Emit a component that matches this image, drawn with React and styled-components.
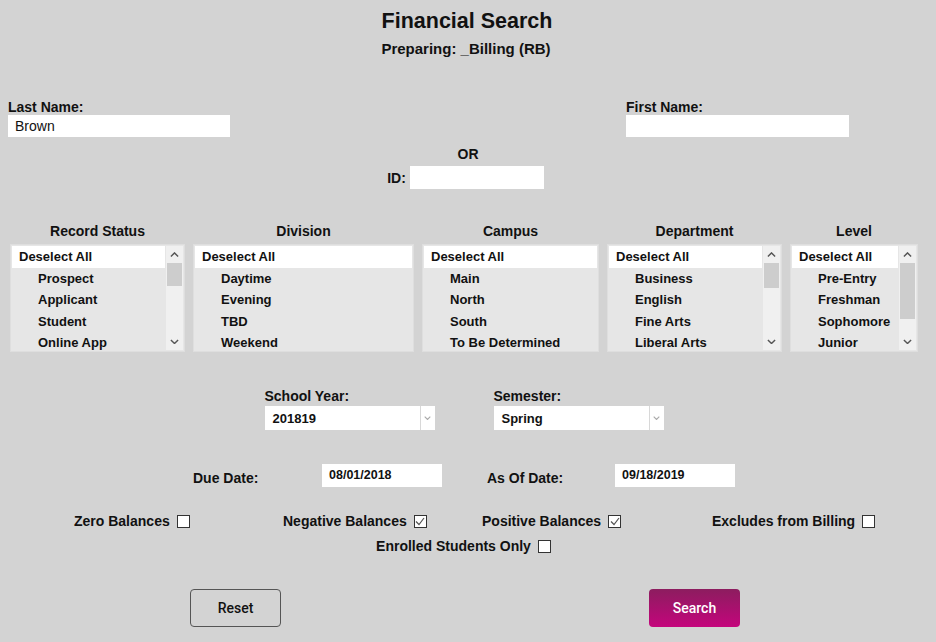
import styled, { createGlobalStyle } from "styled-components";

const Global = createGlobalStyle`
  html, body { margin: 0; padding: 0; background: #d3d3d3; }
  body { font-family: "Liberation Sans", Arial, sans-serif; color: #111; }
`;

const LISTS = [
  { title: "Record Status", width: 175, items: ["Prospect", "Applicant", "Student", "Online App"], thumb: 23 },
  { title: "Division", width: 221, items: ["Daytime", "Evening", "TBD", "Weekend"] },
  { title: "Campus", width: 177, items: ["Main", "North", "South", "To Be Determined"] },
  { title: "Department", width: 175, items: ["Business", "English", "Fine Arts", "Liberal Arts"], thumb: 25 },
  { title: "Level", width: 128, items: ["Pre-Entry", "Freshman", "Sophomore", "Junior"], thumb: 56 },
];

const Page = styled.div`
  width: 936px;
  height: 642px;
  display: flex;
  flex-direction: column;
  overflow: hidden;
`;

const Title = styled.h1`
  margin: 9px 0 0;
  font-size: 21.5px;
  line-height: 24px;
  text-align: center;
  font-weight: bold;
  padding-right: 2px;
`;

const Subtitle = styled.h2`
  margin: 6px 0 0;
  font-size: 15px;
  line-height: 20px;
  text-align: center;
  font-weight: bold;
  padding-right: 4px;
`;

const NameRow = styled.div`
  display: flex;
  justify-content: space-between;
  padding: 0 87px 0 8px;
  margin-top: 40px;
`;

const Field = styled.div`
  display: flex;
  flex-direction: column;
`;

const Label = styled.label`
  font-size: 14px;
  font-weight: bold;
  line-height: 16px;
  white-space: nowrap;
`;

const TextBox = styled.div`
  width: ${p => p.w}px;
  height: ${p => p.h || 22}px;
  background: #fff;
  box-sizing: border-box;
  padding-left: 7px;
  font-size: ${p => p.fs || 14}px;
  font-weight: ${p => (p.bold ? "bold" : "normal")};
  line-height: 22px;
`;

const Or = styled.div`
  margin-top: 9px;
  text-align: center;
  font-size: 14px;
  font-weight: bold;
  line-height: 16px;
`;

const IdRow = styled.div`
  display: flex;
  justify-content: center;
  align-items: center;
  gap: 4px;
  margin-top: 4px;
  padding-right: 5px;
`;

const ListsRow = styled.div`
  display: flex;
  gap: 8px;
  padding-left: 10px;
  margin-top: 34px;
`;

const ListCol = styled.div`
  width: ${p => p.w}px;
  display: flex;
  flex-direction: column;
`;

const ListTitle = styled.div`
  text-align: center;
  font-size: 14px;
  font-weight: bold;
  line-height: 16px;
  margin-bottom: 5px;
`;

const ListBox = styled.div`
  height: 108px;
  box-sizing: border-box;
  border: 1px solid #dedede;
  padding: 1px;
  background: #e6e6e6;
  display: flex;
  overflow: hidden;
`;

const Options = styled.div`
  flex: 1;
  display: flex;
  flex-direction: column;
`;

const Option = styled.div`
  flex: none;
  height: ${p => (p.all ? 22 : 21.4)}px;
  line-height: ${p => (p.all ? 22 : 21.4)}px;
  background: ${p => (p.all ? "#fff" : "transparent")};
  padding-left: ${p => (p.all ? 7 : 26)}px;
  font-size: 13px;
  font-weight: bold;
  white-space: nowrap;
  overflow: hidden;
`;

const Scrollbar = styled.div`
  width: 17px;
  background: #f0f0f0;
  display: flex;
  flex-direction: column;
  align-items: center;
  margin-left: 1px;
`;

const Arrow = styled.div`
  height: 17px;
  width: 17px;
  display: flex;
  align-items: center;
  justify-content: center;
`;

const Thumb = styled.div`
  width: 15px;
  height: ${p => p.h}px;
  background: #cdcdcd;
`;

const Spacer = styled.div`
  flex: 1;
`;

const SelectRow = styled.div`
  display: flex;
  justify-content: center;
  gap: 59px;
  margin-top: 36px;
  padding-right: 8px;
`;

const Select = styled.div`
  width: 170px;
  height: 24px;
  margin-top: 2px;
  background: #fff;
  display: flex;
`;

const SelectValue = styled.div`
  flex: 1;
  padding-left: 8px;
  font-size: 13px;
  font-weight: bold;
  line-height: 26px;
`;

const SelectButton = styled.div`
  width: 14px;
  border-left: 1px solid #d8d8d8;
  display: flex;
  align-items: center;
  justify-content: center;
`;

const DateRow = styled.div`
  display: grid;
  grid-template-columns: 129px 120px 45px 128px 120px;
  align-items: center;
  padding-left: 193px;
  margin-top: 34px;
`;

const DateLabel = styled(Label)`
  padding-top: 4px;
`;

const CheckRow = styled.div`
  display: grid;
  grid-template-columns: 209px 199px 230px auto;
  padding-left: 74px;
  margin-top: 25px;
`;

const CheckCenter = styled.div`
  display: flex;
  justify-content: center;
  margin-top: 7px;
  padding-right: 9px;
`;

const Check = styled.div`
  display: flex;
  align-items: center;
  gap: 7px;
  font-size: 14px;
  font-weight: bold;
  line-height: 18px;
  white-space: nowrap;
`;

const Box = styled.span`
  width: 13px;
  height: 13px;
  box-sizing: border-box;
  border: 1px solid #333;
  background: #fff;
  display: inline-flex;
  align-items: center;
  justify-content: center;
`;

const ButtonRow = styled.div`
  display: flex;
  padding-left: 190px;
  gap: 368px;
  margin-top: 34px;
`;

const Button = styled.button`
  width: 91px;
  height: 38px;
  border-radius: 4px;
  box-sizing: border-box;
  font-family: Roboto, "Liberation Sans", sans-serif;
  font-size: 14px;
  font-weight: 500;
  cursor: pointer;
  border: ${p => (p.primary ? "none" : "1px solid #555")};
  color: ${p => (p.primary ? "#fff" : "#111")};
  background: ${p =>
    p.primary ? "linear-gradient(#8c1d5f, #c4057c)" : "transparent"};
`;

function Chevron({ up, color = "#555", size = 9 }) {
  return (
    <svg width={size} height={size * 0.6} viewBox="0 0 10 6">
      <path
        d={up ? "M1 5 L5 1 L9 5" : "M1 1 L5 5 L9 1"}
        fill="none"
        stroke={color}
        strokeWidth="1.6"
      />
    </svg>
  );
}

function CheckBox({ label, checked }) {
  return (
    <Check>
      {label}
      <Box>
        {checked && (
          <svg width="10" height="9" viewBox="0 0 10 9">
            <path d="M1 4.5 L4 7.5 L9 1" fill="none" stroke="#555" strokeWidth="1.2" />
          </svg>
        )}
      </Box>
    </Check>
  );
}

function List({ title, width, items, thumb }) {
  return (
    <ListCol w={width}>
      <ListTitle>{title}</ListTitle>
      <ListBox>
        <Options>
          <Option all>Deselect All</Option>
          {items.map(i => (
            <Option key={i}>{i}</Option>
          ))}
        </Options>
        {thumb && (
          <Scrollbar>
            <Arrow><Chevron up /></Arrow>
            <Thumb h={thumb} />
            <Spacer />
            <Arrow><Chevron /></Arrow>
          </Scrollbar>
        )}
      </ListBox>
    </ListCol>
  );
}

export default function App() {
  return (
    <Page>
      <Global />
      <Title>Financial Search</Title>
      <Subtitle>Preparing: _Billing (RB)</Subtitle>

      <NameRow>
        <Field>
          <Label>Last Name:</Label>
          <TextBox w={222}>Brown</TextBox>
        </Field>
        <Field>
          <Label>First Name:</Label>
          <TextBox w={223} />
        </Field>
      </NameRow>

      <Or>OR</Or>
      <IdRow>
        <Label>ID:</Label>
        <TextBox w={134} h={23} />
      </IdRow>

      <ListsRow>
        {LISTS.map(l => (
          <List key={l.title} {...l} />
        ))}
      </ListsRow>

      <SelectRow>
        <Field>
          <Label>School Year:</Label>
          <Select>
            <SelectValue>201819</SelectValue>
            <SelectButton><Chevron color="#aaa" size={7} /></SelectButton>
          </Select>
        </Field>
        <Field>
          <Label>Semester:</Label>
          <Select>
            <SelectValue>Spring</SelectValue>
            <SelectButton><Chevron color="#aaa" size={7} /></SelectButton>
          </Select>
        </Field>
      </SelectRow>

      <DateRow>
        <DateLabel>Due Date:</DateLabel>
        <TextBox w={120} h={23} fs={12.5} bold>08/01/2018</TextBox>
        <span />
        <DateLabel>As Of Date:</DateLabel>
        <TextBox w={120} h={23} fs={12.5} bold>09/18/2019</TextBox>
      </DateRow>

      <CheckRow>
        <CheckBox label="Zero Balances" />
        <CheckBox label="Negative Balances" checked />
        <CheckBox label="Positive Balances" checked />
        <CheckBox label="Excludes from Billing" />
      </CheckRow>
      <CheckCenter>
        <CheckBox label="Enrolled Students Only" />
      </CheckCenter>

      <ButtonRow>
        <Button>Reset</Button>
        <Button primary>Search</Button>
      </ButtonRow>
    </Page>
  );
}
